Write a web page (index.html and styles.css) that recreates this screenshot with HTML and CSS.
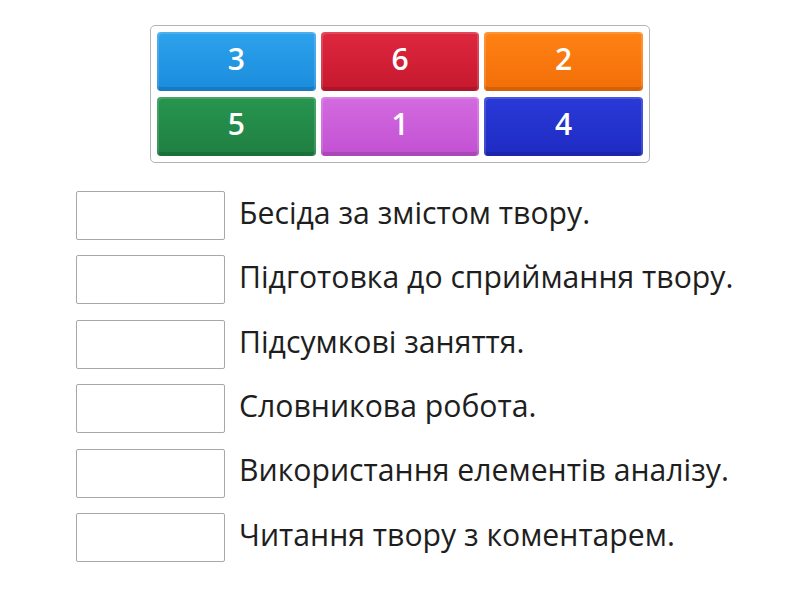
FILE: index.html
```html
<!DOCTYPE html>
<html>
<head>
<meta charset="utf-8">
<link rel="stylesheet" href="styles.css">
</head>
<body>
<div class="page">
  <div class="tiles">
    <div class="tile blue">3</div>
    <div class="tile red">6</div>
    <div class="tile orange">2</div>
    <div class="tile green">5</div>
    <div class="tile purple">1</div>
    <div class="tile navy">4</div>
  </div>
  <div class="rows">
    <div class="row"><div class="box"></div><div class="label">Бесіда за змістом твору.</div></div>
    <div class="row"><div class="box"></div><div class="label">Підготовка до сприймання твору.</div></div>
    <div class="row"><div class="box"></div><div class="label">Підсумкові заняття.</div></div>
    <div class="row"><div class="box"></div><div class="label">Словникова робота.</div></div>
    <div class="row"><div class="box"></div><div class="label">Використання елементів аналізу.</div></div>
    <div class="row"><div class="box"></div><div class="label">Читання твору з коментарем.</div></div>
  </div>
</div>
</body>
</html>
```

FILE: styles.css
```css
html, body {
  margin: 0;
  padding: 0;
  background: #fff;
}
body {
  font-family: "Open Sans", "Noto Sans", sans-serif;
  width: 800px;
  height: 600px;
  overflow: hidden;
}
.page {
  display: flex;
  flex-direction: column;
  padding-top: 25px;
}
.tiles {
  align-self: center;
  width: 500px;
  box-sizing: border-box;
  border: 1px solid #b4b4b4;
  border-radius: 5px;
  padding: 6px;
  display: grid;
  grid-template-columns: repeat(3, 1fr);
  grid-auto-rows: 59px;
  column-gap: 5px;
  row-gap: 6px;
}
.tile {
  border-radius: 4px;
  color: #fff;
  font-weight: 600;
  font-size: 30px;
  line-height: 1;
  display: flex;
  align-items: center;
  justify-content: center;
  padding-bottom: 6px;
  box-sizing: border-box;
  box-shadow: inset 2px 2px 0 rgba(255,255,255,0.15), inset -2px 0 0 rgba(255,255,255,0.15), inset 0 -4px 0 rgba(0,0,0,0.12);
}
.blue { background: linear-gradient(#2ea2ec, #1a8cdc); }
.red { background: linear-gradient(#de283f, #c6182e); }
.orange { background: linear-gradient(#ff8214, #f26e08); }
.green { background: linear-gradient(#27954f, #1f7f42); }
.purple { background: linear-gradient(#d36be0, #c250d2); }
.navy { background: linear-gradient(#2a3ad8, #1e2bc2); }
.rows {
  margin-top: 28px;
  padding-left: 76px;
  display: flex;
  flex-direction: column;
  gap: 15.4px;
}
.row {
  display: flex;
  align-items: center;
  gap: 14px;
}
.box {
  width: 149px;
  height: 49px;
  box-sizing: border-box;
  border: 1px solid #a8a8a8;
  border-radius: 2px;
  background: #fff;
}
.label {
  font-size: 30.2px;
  color: #1e1e1e;
  line-height: 1;
  padding-bottom: 5px;
}
```
